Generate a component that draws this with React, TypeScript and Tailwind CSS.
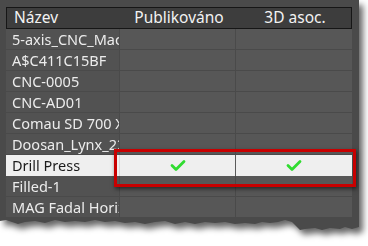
const rows = [
  { name: "5-axis_CNC_Machine" },
  { name: "A$C411C15BF" },
  { name: "CNC-0005" },
  { name: "CNC-AD01" },
  { name: "Comau SD 700 XL" },
  { name: "Doosan_Lynx_220" },
  { name: "Drill Press", published: true, assoc: true, selected: true },
  { name: "Filled-1" },
  { name: "MAG Fadal Horizontal" },
];

function Check() {
  return (
    <svg width="16" height="13" viewBox="0 0 16 13" className="block">
      <polyline
        points="2,6.5 6,10.5 14,2.5"
        fill="none"
        stroke="#30dc30"
        strokeWidth="2.8"
        strokeLinecap="round"
        strokeLinejoin="round"
      />
    </svg>
  );
}

export default function App() {
  return (
    <div className="relative w-[368px] h-[246px] bg-white overflow-hidden font-['Noto_Sans',sans-serif]">
      <div className="[filter:drop-shadow(4px_5px_3px_rgba(0,0,0,0.6))]">
        <div className="w-[359px] h-[232px] bg-[#4a4a4a] pt-[7px] pl-[6px] [clip-path:polygon(0_0,359px_0,359px_227px,352px_229px,345px_227px,340px_229px,330px_228px,322px_230px,315px_228px,305px_229px,300px_230px,296px_226px,292px_222px,285px_220px,278px_222px,270px_223px,262px_222px,255px_224px,245px_223px,235px_224px,225px_222px,215px_223px,205px_222px,195px_224px,185px_222px,175px_224px,165px_221px,155px_222px,145px_224px,135px_222px,125px_223px,115px_221px,105px_222px,95px_220px,85px_222px,75px_221px,65px_222px,55px_220px,45px_223px,35px_221px,25px_222px,18px_224px,12px_222px,6px_220px,0_221px)]">
          <div className="w-[346px]">
            <div className="grid grid-cols-[114px_116px_116px] h-[22px] bg-[#3d3d3d] border border-[#161616] text-[15.5px] text-[#f2f2f2] leading-none">
              <div className="flex items-center pl-[7px]">Název</div>
              <div className="flex items-center justify-center">Publikováno</div>
              <div className="flex items-center justify-center">3D asoc.</div>
            </div>
            {rows.map((r) => (
              <div
                key={r.name}
                className={
                  r.selected
                    ? "grid grid-cols-[114px_116px_116px] h-[21px] bg-[#efefef] text-[#1b1b1b] text-[14.5px] leading-none"
                    : "grid grid-cols-[114px_116px_116px] h-[21px] bg-[#575757] text-[#ececec] text-[14.5px] leading-none"
                }
              >
                <div
                  className={
                    r.selected
                      ? "flex items-center pl-[6px] overflow-hidden whitespace-nowrap border-r border-[#d8d8d8]"
                      : "flex items-center pl-[6px] overflow-hidden whitespace-nowrap border-r border-b border-[#4a4a4a] bg-[#525252]"
                  }
                >
                  {r.name}
                </div>
                <div
                  className={
                    r.selected
                      ? "flex items-center justify-center border-r border-[#5a5a5a]"
                      : "flex items-center justify-center border-r border-b border-[#4a4a4a]"
                  }
                >
                  {r.published && <Check />}
                </div>
                <div
                  className={
                    r.selected
                      ? "flex items-center justify-center"
                      : "flex items-center justify-center border-b border-[#4a4a4a]"
                  }
                >
                  {r.assoc && <Check />}
                </div>
              </div>
            ))}
          </div>
        </div>
      </div>
      {/* callout around the selected row's flags */}
      <div className="absolute left-[114px] top-[149px] w-[242px] h-[38px] border-[3px] border-[#c80000] shadow-[1px_2px_4px_rgba(0,0,0,0.55)]" />
    </div>
  );
}
